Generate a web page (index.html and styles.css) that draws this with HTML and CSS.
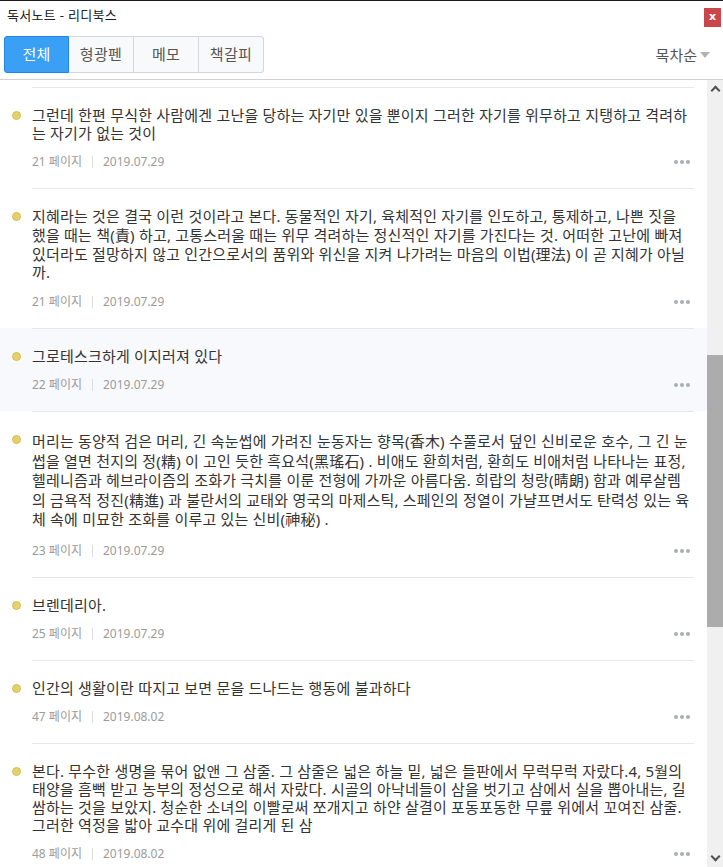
FILE: index.html
```html
<!doctype html>
<html lang="ko">
<head>
    <meta charset="UTF-8">
    <title>독서노트 - 리디북스</title>
    <link rel="stylesheet" href="styles.css">
</head>
<body>
<div class="window">
    <div class="titlebar">
        <span class="title">독서노트 - 리디북스</span>
        <span class="close">x</span>
    </div>

    <div class="toolbar">
        <ul class="tabs">
            <li class="on">전체</li>
            <li>형광펜</li>
            <li>메모</li>
            <li>책갈피</li>
        </ul>
        <div class="sort">목차순<span class="caret"></span></div>
    </div>

    <div class="content">
        <ul class="notes">
            <li class="note">
                <span class="dot"></span>
                <div class="body">
                    <p class="text">그런데 한편 무식한 사람에겐 고난을 당하는 자기만 있을 뿐이지 그러한 자기를 위무하고 지탱하고 격려하는 자기가 없는 것이</p>
                    <div class="meta"><span>21 페이지</span><i></i><span>2019.07.29</span><b class="more"></b></div>
                </div>
            </li>
            <li class="note">
                <span class="dot"></span>
                <div class="body">
                    <p class="text hanja">지혜라는 것은 결국 이런 것이라고 본다. 동물적인 자기, 육체적인 자기를 인도하고, 통제하고, 나쁜 짓을 했을 때는 책(責) 하고, 고통스러울 때는 위무 격려하는 정신적인 자기를 가진다는 것. 어떠한 고난에 빠져 있더라도 절망하지 않고 인간으로서의 품위와 위신을 지켜 나가려는 마음의 이법(理法) 이 곧 지혜가 아닐까.</p>
                    <div class="meta"><span>21 페이지</span><i></i><span>2019.07.29</span><b class="more"></b></div>
                </div>
            </li>
            <li class="note hover">
                <span class="dot"></span>
                <div class="body">
                    <p class="text">그로테스크하게 이지러져 있다</p>
                    <div class="meta"><span>22 페이지</span><i></i><span>2019.07.29</span><b class="more"></b></div>
                </div>
            </li>
            <li class="note">
                <span class="dot"></span>
                <div class="body">
                    <p class="text hanja dense">머리는 동양적 검은 머리, 긴 속눈썹에 가려진 눈동자는 향목(香木) 수풀로서 덮인 신비로운 호수, 그 긴 눈썹을 열면 천지의 정(精) 이 고인 듯한 흑요석(黑瑤石) . 비애도 환희처럼, 환희도 비애처럼 나타나는 표정, 헬레니즘과 헤브라이즘의 조화가 극치를 이룬 전형에 가까운 아름다움. 희랍의 청랑(晴朗) 함과 예루살렘의 금욕적 정진(精進) 과 불란서의 교태와 영국의 마제스틱, 스페인의 정열이 가냘프면서도 탄력성 있는 육체 속에 미묘한 조화를 이루고 있는 신비(神秘) .</p>
                    <div class="meta"><span>23 페이지</span><i></i><span>2019.07.29</span><b class="more"></b></div>
                </div>
            </li>
            <li class="note">
                <span class="dot"></span>
                <div class="body">
                    <p class="text">브렌데리아.</p>
                    <div class="meta"><span>25 페이지</span><i></i><span>2019.07.29</span><b class="more"></b></div>
                </div>
            </li>
            <li class="note">
                <span class="dot"></span>
                <div class="body">
                    <p class="text">인간의 생활이란 따지고 보면 문을 드나드는 행동에 불과하다</p>
                    <div class="meta"><span>47 페이지</span><i></i><span>2019.08.02</span><b class="more"></b></div>
                </div>
            </li>
            <li class="note">
                <span class="dot"></span>
                <div class="body">
                    <p class="text">본다. 무수한 생명을 묶어 없앤 그 삼줄. 그 삼줄은 넓은 하늘 밑, 넓은 들판에서 무럭무럭 자랐다.4, 5월의 태양을 흠뻑 받고 농부의 정성으로 해서 자랐다. 시골의 아낙네들이 삼을 벗기고 삼에서 실을 뽑아내는, 길쌈하는 것을 보았지. 청순한 소녀의 이빨로써 쪼개지고 하얀 살결이 포동포동한 무릎 위에서 꼬여진 삼줄. 그러한 역정을 밟아 교수대 위에 걸리게 된 삼</p>
                    <div class="meta"><span>48 페이지</span><i></i><span>2019.08.02</span><b class="more"></b></div>
                </div>
            </li>
        </ul>

        <div class="scrollbar">
            <span class="arrow up"></span>
            <div class="track"><span class="thumb"></span></div>
            <span class="arrow down"></span>
        </div>
    </div>
</div>
</body>
</html>
```

FILE: styles.css
```css
* {
    margin: 0;
    padding: 0;
    list-style: none;
    box-sizing: border-box;
}

body {
    width: 723px;
    height: 867px;
    overflow: hidden;
    background: #fff;
    font-family: "Noto Sans", "Noto Sans CJK KR", sans-serif;
    color: #333;
}

.window {
    height: 867px;
    display: flex;
    flex-direction: column;
    border-top: 1px solid #1b1b1b;
}

/* title bar */
.titlebar {
    height: 29px;
    display: flex;
    align-items: flex-start;
    justify-content: space-between;
    padding: 0 2px 0 7px;
}

.title {
    font-size: 13px;
    line-height: 29px;
    color: #222;
    letter-spacing: 0.3px;
}

.close {
    width: 17px;
    height: 19px;
    margin-top: 7px;
    background: #c9474b;
    color: #fff;
    font: bold 11px/18px "DejaVu Sans", sans-serif;
    text-align: center;
}

/* tabs + sort */
.toolbar {
    display: flex;
    align-items: center;
    justify-content: space-between;
    padding: 6px 13px 6px 4px;
    border-bottom: 1px solid #d2d2d2;
}

.tabs {
    display: flex;
}

.tabs li {
    width: 65px;
    height: 37px;
    line-height: 35px;
    text-align: center;
    font-size: 15px;
    letter-spacing: 0.3px;
    color: #555;
    background: #f8f9fa;
    border: 1px solid #d4d8dd;
    border-left: none;
}

.tabs li:first-child {
    border-left: 1px solid #d4d8dd;
    border-radius: 3px 0 0 3px;
}

.tabs li:last-child {
    border-radius: 0 3px 3px 0;
}

.tabs .on {
    background: #3aa0f6;
    border-color: #2187e4;
    color: #fff;
}

.tabs li.on:first-child {
    border-left-color: #2187e4;
}

.sort {
    font-size: 15px;
    color: #555;
    display: flex;
    align-items: center;
}

.caret {
    margin-left: 3px;
    margin-top: 1px;
    border-left: 5px solid transparent;
    border-right: 5px solid transparent;
    border-top: 6px solid #b4b4b4;
}

/* list */
.content {
    flex: 1;
    min-height: 0;
    display: flex;
}

.notes {
    flex: 1;
    overflow: hidden;
    padding-top: 7px;
}

.note {
    display: flex;
    padding: 0 13px 0 12px;
}

.note.hover {
    background: #f8f9fc;
}

.dot {
    flex: none;
    width: 9px;
    height: 9px;
    margin: 24px 11px 0 0;
    border-radius: 50%;
    background: #e6d06d;
    border: 1px solid #d5bf56;
}

.body {
    flex: 1;
    border-top: 1px solid #e6e7e9;
    padding: 18px 0 17px;
}

.text {
    font-size: 15px;
    letter-spacing: 0.2px;
    line-height: 18px;
    color: #333;
}

.text.hanja {
    line-height: 18.75px;
}

.text.dense {
    line-height: 19.6px;
    padding: 2px 0 1px;
}

.meta {
    margin-top: 11px;
    display: flex;
    align-items: center;
    font-size: 12px;
    line-height: 18px;
    color: #9b9b9b;
}

.meta i {
    width: 1px;
    height: 12px;
    margin: 0 10px 0 10px;
    background: #dcdcdc;
}

.more {
    margin-left: auto;
    margin-right: 4px;
    width: 4px;
    height: 4px;
    border-radius: 50%;
    background: #a9aeb5;
    box-shadow: -6px 0 #a9aeb5, -12px 0 #a9aeb5;
}

/* scrollbar */
.scrollbar {
    flex: none;
    width: 16px;
    display: flex;
    flex-direction: column;
    background: #f0f0f0;
}

.arrow {
    height: 17px;
    display: flex;
    align-items: center;
    justify-content: center;
}

.arrow::before {
    content: "";
    width: 5px;
    height: 5px;
    border-left: 2px solid #505050;
    border-top: 2px solid #505050;
}

.arrow.up::before {
    transform: translateY(2px) rotate(45deg);
}

.arrow.down::before {
    transform: translateY(-2px) rotate(225deg);
}

.track {
    flex: 1;
    padding-top: 258px;
}

.thumb {
    display: block;
    height: 272px;
    background: #acacac;
}
```
